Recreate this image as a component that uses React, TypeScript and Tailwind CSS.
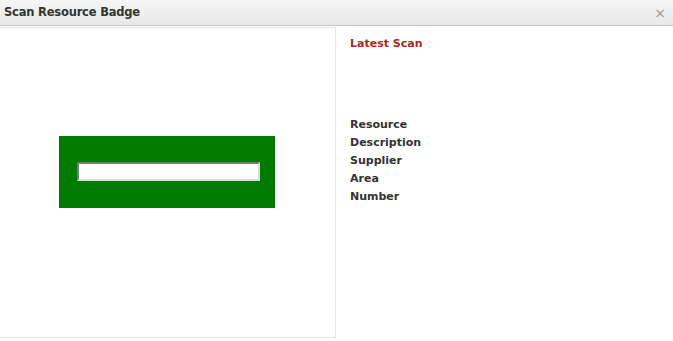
export default function App() {
  return (
    <div className="w-[673px] h-[341px] bg-white overflow-hidden font-['DejaVu_Sans',sans-serif]">
      {/* title bar */}
      <div className="h-[26px] flex items-center justify-between pl-[4px] pr-[7px] bg-gradient-to-b from-[#f6f6f6] to-[#e8e8e8] border-b border-[#c4c4c4]">
        <span className="text-[11.5px] font-bold text-[#333] tracking-[-0.2px]">Scan Resource Badge</span>
        <span className="text-[14px] text-[#999] leading-none">×</span>
      </div>

      <div className="flex pt-[1px]">
        {/* badge panel */}
        <div className="w-[336px] h-[311px] border-r border-b border-t border-[#dde6ef] flex items-center justify-center">
          <div className="w-[216px] h-[72px] bg-[#007a00] flex items-center pl-[18px] -mt-[22px] -ml-[2px]">
            <input
              type="text"
              className="w-[183px] h-[19px] bg-white border-2 border-t-[#7a7a7a] border-l-[#7a7a7a] border-b-[#dcdcdc] border-r-[#dcdcdc] outline-none"
            />
          </div>
        </div>

        {/* details */}
        <div className="flex-1 pl-[14px] pt-[9px] text-[11px] font-bold">
          <div className="text-[#a52a1a]">Latest Scan</div>
          <div className="mt-[63px] text-[#333] leading-[18px]">
            <div>Resource</div>
            <div>Description</div>
            <div>Supplier</div>
            <div>Area</div>
            <div>Number</div>
          </div>
        </div>
      </div>
    </div>
  );
}
